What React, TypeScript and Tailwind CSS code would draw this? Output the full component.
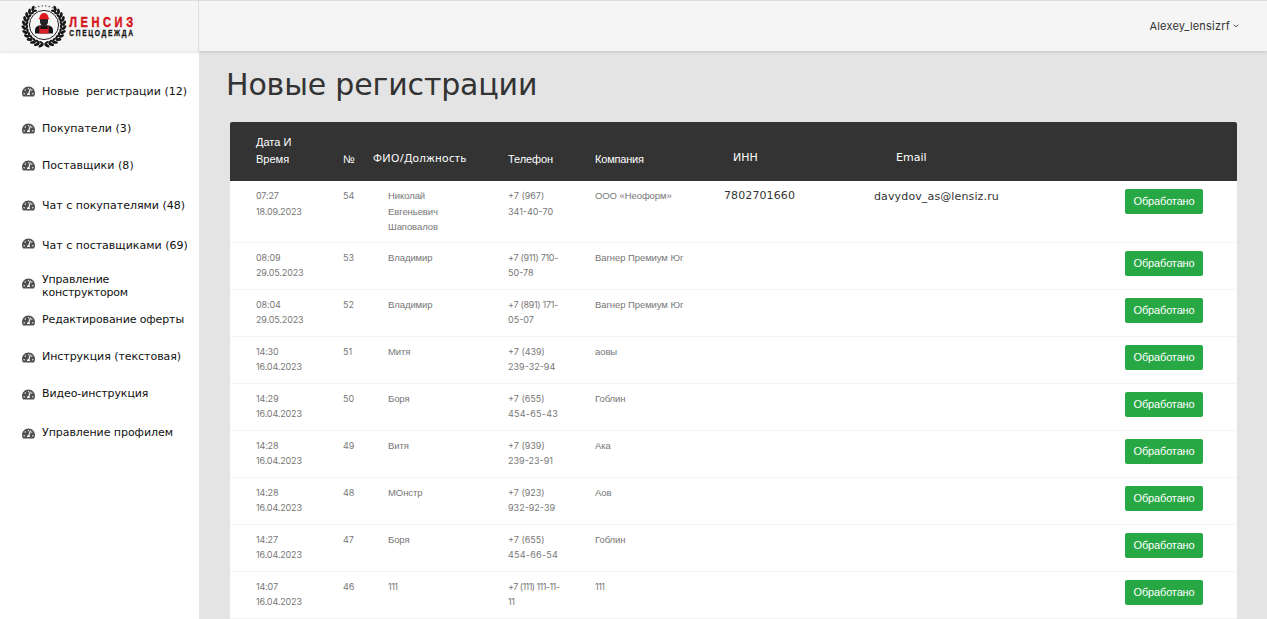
import { FaTachometerAlt } from "react-icons/fa";

type MenuItem = { label: string; gap: string; icon: string; text: string };

const menu: MenuItem[] = [
  { label: "Новые  регистрации (12)", gap: "mt-[26px]", icon: "mt-[2px]", text: "pt-[2px] tracking-[0.02px]" },
  { label: "Покупатели (3)", gap: "mt-[11px]", icon: "mt-[2px]", text: "pt-[2px] tracking-[0.05px]" },
  { label: "Поставщики (8)", gap: "mt-[11px]", icon: "mt-[2px]", text: "pt-[2px] tracking-[0.05px]" },
  { label: "Чат с покупателями (48)", gap: "mt-[14px]", icon: "mt-[2px]", text: "pt-[2px] tracking-[0px]" },
  { label: "Чат с поставщиками (69)", gap: "mt-[14px]", icon: "-mt-[2px]", text: "pt-[2px] tracking-[0px]" },
  { label: "Управление\nконструктором", gap: "mt-[15px]", icon: "-mt-[3px]", text: "pt-[2px] tracking-[-0.18px]" },
  { label: "Редактирование оферты", gap: "mt-[8px]", icon: "mt-[2px]", text: "pt-[1px] tracking-[-0.12px]" },
  { label: "Инструкция (текстовая)", gap: "mt-[11px]", icon: "mt-[2px]", text: "pt-[1px] tracking-[-0.05px]" },
  { label: "Видео-инструкция", gap: "mt-[11px]", icon: "mt-[2px]", text: "pt-[1px] tracking-[-0.1px]" },
  { label: "Управление профилем", gap: "mt-[13px]", icon: "mt-[2px]", text: "pt-[1px] tracking-[-0.06px]" },
];

type Row = {
  time: string;
  date: string;
  id: string;
  name: string;
  phone: [string, string];
  phoneTrack: [string, string];
  company: string;
  inn?: string;
  email?: string;
};

const none = "tracking-[0px]";
const wide = "tracking-[0.25px]";
const tight = "tracking-[-0.3px]";

const rows: Row[] = [
  { time: "07:27", date: "18.09.2023", id: "54", name: "Николай\nЕвгеньевич\nШаповалов", phone: ["+7 (967)", "341-40-70"], phoneTrack: [none, none], company: "ООО «Неоформ»", inn: "7802701660", email: "davydov_as@lensiz.ru" },
  { time: "08:09", date: "29.05.2023", id: "53", name: "Владимир", phone: ["+7 (911) 710-", "50-78"], phoneTrack: [tight, none], company: "Вагнер Премиум Юг" },
  { time: "08:04", date: "29.05.2023", id: "52", name: "Владимир", phone: ["+7 (891) 171-", "05-07"], phoneTrack: [tight, none], company: "Вагнер Премиум Юг" },
  { time: "14:30", date: "16.04.2023", id: "51", name: "Митя", phone: ["+7 (439)", "239-32-94"], phoneTrack: [none, none], company: "аовы" },
  { time: "14:29", date: "16.04.2023", id: "50", name: "Боря", phone: ["+7 (655)", "454-65-43"], phoneTrack: [none, wide], company: "Гоблин" },
  { time: "14:28", date: "16.04.2023", id: "49", name: "Витя", phone: ["+7 (939)", "239-23-91"], phoneTrack: [none, none], company: "Ака" },
  { time: "14:28", date: "16.04.2023", id: "48", name: "МОнстр", phone: ["+7 (923)", "932-92-39"], phoneTrack: [none, none], company: "Аов" },
  { time: "14:27", date: "16.04.2023", id: "47", name: "Боря", phone: ["+7 (655)", "454-66-54"], phoneTrack: [none, wide], company: "Гоблин" },
  { time: "14:07", date: "16.04.2023", id: "46", name: "111", phone: ["+7 (111) 111-11-", "11"], phoneTrack: ["tracking-[-0.55px]", tight], company: "111" },
];

const textFont = (value: string) =>
  /^\d+$/.test(value) ? "font-['Inter',sans-serif] text-[9px] tracking-[-0.5px]" : "tracking-[-0.08px]";

const leafAngles = Array.from({ length: 12 }, (_, i) => 36 + i * 12.6);

function Logo() {
  return (
    <svg width="116" height="46" viewBox="0 0 116 46" className="shrink-0">
      <g fill="#161616">
        {[1, -1].map((side) =>
          leafAngles.map((a) => (
            <g key={`${side}-${a}`} transform={`translate(23 22.500) scale(${side} 1) rotate(${a})`}>
              <ellipse cx="-1" cy="-20.200" rx="2.900" ry="1.450" transform="rotate(35 -1 -20.200)" />
              <ellipse cx="-1" cy="-17.300" rx="2.500" ry="1.150" transform="rotate(-25 -1 -17.300)" />
            </g>
          )),
        )}
        {[-25, -15, -5, 5, 15, 25].map((a) => (
          <circle key={a} cx="23" cy="2.800" r="0.750" fill="#555" transform={`rotate(${a} 23 23)`} />
        ))}
      </g>
      <circle cx="23" cy="22" r="14.600" fill="#f5f5f5" stroke="#222" strokeWidth="1" />
      <path d="M14 30.500v-3.500c0-2.700 2-4.200 5.500-4.700h7c3.500.5 5.500 2 5.500 4.700v3.500z" fill="#161616" />
      <path d="M19 15.500h8v3.200c0 2.500-1.800 4.300-4 4.300s-4-1.800-4-4.300z" fill="#222" />
      <path d="M19.300 23v3h7.400v-3l1 .3v7.200h-9.400v-7.200z" fill="#d51f26" />
      <path d="M17.800 16.300v-1.300h.7c0-3 1.900-5 4.500-5s4.500 2 4.500 5h.7v1.300z" fill="#e01820" />
      <g fontFamily="'Liberation Sans',sans-serif" fontWeight="700">
        <text transform="translate(48.200 24) scale(.76 1)" textLength="84" lengthAdjust="spacing" fontSize="14.500" fill="#d5161d" stroke="#d5161d" strokeWidth=".5">ЛЕНСИЗ</text>
        <text transform="translate(48.200 33.300) scale(.76 1)" textLength="84" lengthAdjust="spacing" fontSize="8.800" fill="#161616" stroke="#161616" strokeWidth=".3">СПЕЦОДЕЖДА</text>
      </g>
    </svg>
  );
}

const columns = "grid grid-cols-[87px_45px_120px_87px_129px_149px_252px_78px] pl-[26px]";

export default function App() {
  return (
    <div className="flex h-[619px] w-full flex-col overflow-hidden bg-[#e4e4e4] font-['DejaVu_Sans',sans-serif]">
      <header className="z-10 flex h-[51px] shrink-0 border-t border-[#dcdcdc] bg-[#f5f5f5] shadow-[0_1px_3px_rgba(0,0,0,0.15)]">
        <div className="flex w-[199px] items-center border-r border-[#dedede] pl-[21px]">
          <Logo />
        </div>
        <div className="flex flex-1 items-center justify-end pr-[28px] text-[11px] text-[#333]">
          <span className="font-['Inter',sans-serif] tracking-[0.2px]">Alexey_lensizrf</span>
          <svg width="6" height="4" viewBox="0 0 6 4" className="ml-[3px]" fill="none" stroke="#555">
            <path d="M.7.7 3 2.800 5.300.7" />
          </svg>
        </div>
      </header>
      <div className="flex min-h-0 flex-1">
        <nav className="w-[199px] shrink-0 bg-white pl-[22px]">
          {menu.map((m) => (
            <a key={m.label} className={`flex h-[26px] items-center gap-[7px] ${m.gap}`}>
              <FaTachometerAlt className={`size-[13px] shrink-0 text-[#505050] ${m.icon}`} />
              <span className={`text-[11px] leading-[13px] whitespace-pre text-[#111] ${m.text}`}>{m.label}</span>
            </a>
          ))}
        </nav>
        <main className="flex-1 pr-[30px] pl-[31px]">
          <h1 className="-ml-[4px] h-[71px] pt-[14px] text-[30px] leading-[40px] tracking-[-0.15px] whitespace-nowrap text-[#333]">Новые регистрации</h1>
          <section className="rounded-t-[2px] bg-white">
            <div className={`${columns} h-[59px] rounded-t-[2px] bg-[#333] font-['Liberation_Sans',sans-serif] text-[11px] leading-[17px] text-white`}>
              <span className="pt-[12px]">Дата И<br />Время</span>
              <span className="pt-[29px]">№</span>
              <span className="-ml-[15px] pt-[27px] font-['Noto_Sans',sans-serif] tracking-[0.35px]">ФИО/Должность</span>
              <span className="pt-[29px] tracking-[-0.1px]">Телефон</span>
              <span className="pt-[29px] tracking-[-0.2px]">Компания</span>
              <span className="pt-[27px] pl-[9px] font-['DejaVu_Sans',sans-serif]">ИНН</span>
              <span className="pt-[27px] pl-[23px] font-['DejaVu_Sans',sans-serif]">Email</span>
            </div>
            {rows.map((r) => (
              <div key={r.id} className={`${columns} min-h-[47px] border-b border-[#f4f4f4] pb-[7px] font-['Liberation_Sans',sans-serif] text-[9.5px] leading-[15.5px] whitespace-pre text-[#777]`}>
                <span className="pt-[7px] font-['Inter',sans-serif] text-[9px] tracking-[-0.15px]">{r.time}<br />{r.date}</span>
                <span className="pt-[7px] font-['Inter',sans-serif] text-[9px]">{r.id}</span>
                <span className={`pt-[7px] ${textFont(r.name)}`}>{r.name}</span>
                <span className="flex flex-col pt-[7px] font-['Inter',sans-serif] text-[9px]">
                  <span className={r.phoneTrack[0]}>{r.phone[0]}</span>
                  <span className={r.phoneTrack[1]}>{r.phone[1]}</span>
                </span>
                <span className={`pt-[7px] ${textFont(r.company)}`}>{r.company}</span>
                <span className="pt-[7px] font-['DejaVu_Sans',sans-serif] text-[11px] tracking-[0.1px] text-[#333]">{r.inn}</span>
                <span className="pt-[8px] pl-[1px] font-['DejaVu_Sans',sans-serif] text-[11px] tracking-[0.13px] text-[#333]">{r.email}</span>
                <button className="mt-[8px] h-[25px] rounded-[2px] bg-[#28a745] text-center text-[11px] leading-[25px] tracking-[-0.15px] text-white">Обработано</button>
              </div>
            ))}
          </section>
        </main>
      </div>
    </div>
  );
}
